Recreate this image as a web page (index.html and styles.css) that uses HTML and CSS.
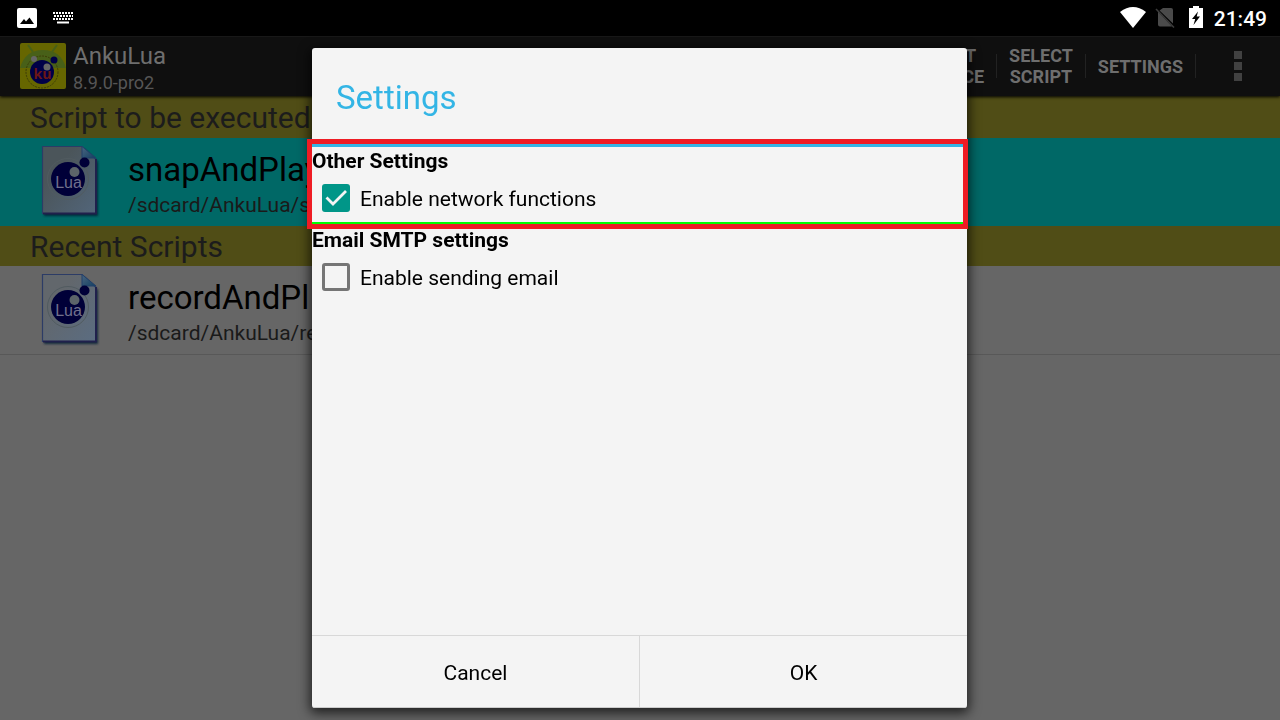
FILE: index.html
```html
<!DOCTYPE html>
<html lang="en">
<head>
<meta charset="utf-8">
<meta name="viewport" content="width=device-width, initial-scale=1">
<title>AnkuLua</title>
<link rel="stylesheet" href="styles.css">
</head>
<body>
<svg class="defs" width="0" height="0" aria-hidden="true">
  <defs>
    <linearGradient id="paper" x1="0" y1="0" x2="1" y2="1">
      <stop offset="0.3" stop-color="#56708f" stop-opacity="0"/>
      <stop offset="1" stop-color="#56708f" stop-opacity="0.6"/>
    </linearGradient>
    <linearGradient id="fold" x1="0" y1="0" x2="1" y2="1">
      <stop offset="0" stop-color="#4b6680"/>
      <stop offset="1" stop-color="#123f62"/>
    </linearGradient>
    <filter id="soft"><feGaussianBlur stdDeviation="1.2"/></filter>
    <symbol id="lua-file" viewBox="0 0 62 74">
      <path d="M4 4H44L58 17V71H4Z" fill="#001c30" opacity="0.8" filter="url(#soft)"/>
      <path class="sheet" d="M2.500 1.500H42L56 14.500V68.500H2.500Z"/>
      <path d="M2.500 1.500H42L56 14.500V68.500H2.500Z" fill="url(#paper)" stroke="#2c3c66" stroke-width="1.200"/>
      <path d="M42 1.500V13H56Z" fill="url(#fold)" stroke="#22406a"/>
      <path d="M56 14V68.500H3" fill="none" stroke="#20204c" stroke-width="2"/>
      <circle cx="28" cy="34" r="20.500" fill="none" stroke="#515b60" stroke-width="1"/>
      <circle cx="28" cy="34" r="17" fill="#000038"/>
      <circle cx="44.500" cy="17.500" r="5" fill="#000038"/>
      <circle cx="34.500" cy="27" r="5" fill="#5c6469"/>
      <text x="28.500" y="43" text-anchor="middle" class="lua-text">Lua</text>
    </symbol>
  </defs>
</svg>
<div class="screen">
  <header class="status">
    <div class="status-group">
      <svg width="20" height="20" viewBox="0 0 20 20" aria-hidden="true"><rect width="20" height="20" rx="2" fill="#fff"/><path d="M3 16L7 11L9 13.500L12.500 9.500L17 16Z"/></svg>
      <svg width="20" height="12" viewBox="0 0 20 12" aria-hidden="true"><path d="M0 1H20M1 4H20M0 7H20" stroke="#fff" stroke-width="2" stroke-dasharray="2 1"/><path d="M4 10.500H16" stroke="#fff" stroke-width="2"/></svg>
    </div>
    <div class="status-group right">
      <svg class="wifi" width="26" height="22" viewBox="0 0 26 22" aria-hidden="true"><path d="M0 6Q13 -4 26 6L13 22Z" fill="#fff"/></svg>
      <svg width="20" height="22" viewBox="0 0 20 22" aria-hidden="true"><path d="M8 2H16Q18 2 18 4V17.500L4.500 4.500ZM3 5.500L17 20.500H5Q3 20.500 3 18.500Z" fill="#4a4a4a"/><path d="M1 3L19 21.500" stroke="#3c3c3c" stroke-width="1.500"/></svg>
      <svg width="14" height="22" viewBox="0 0 14 22" aria-hidden="true"><path d="M4 0H10V2H14V22H0V2H4Z" fill="#fff"/><path d="M9 5.500L3 13H6.200L4.500 19L11 10.500H7.700Z"/></svg>
      <time>21:49</time>
    </div>
  </header>

  <div class="appbar">
    <svg class="logo" width="48" height="48" viewBox="0 0 48 48" role="img" aria-label="AnkuLua">
      <rect x="1" y="1" width="46" height="46" rx="2" fill="#666600"/>
      <path d="M1 26Q6 8 24 8Q42 8 47 26Z" fill="#486018"/>
      <path d="M9 3L14 10M38 3L33 10" stroke="#486018" stroke-width="2"/>
      <circle cx="23" cy="30" r="16" fill="none" stroke="#3d3d08" stroke-dasharray="2 1"/>
      <circle cx="23" cy="30" r="12" fill="#000047"/>
      <circle cx="35" cy="18" r="3.500" fill="#000047"/>
      <circle cx="15" cy="17" r="3" fill="#666"/>
      <circle cx="28" cy="25" r="3.500" fill="#666"/>
      <text x="23.500" y="37" text-anchor="middle" class="logo-text">ku</text>
    </svg>
    <div class="brand">
      <h1>AnkuLua</h1>
      <p>8.9.0-pro2</p>
    </div>
    <nav class="actions">
      <button type="button">START<br>SERVICE</button>
      <button type="button">SELECT<br>SCRIPT</button>
      <button type="button">SETTINGS</button>
      <button type="button" class="more" aria-label="More options">
        <svg width="8" height="30" viewBox="0 0 8 30" fill="#414141" aria-hidden="true"><path d="M0 0H8V8H0ZM0 11H8V19H0ZM0 22H8V30H0Z"/></svg>
      </button>
    </nav>
  </div>

  <main>
    <h2 class="band first">Script to be executed</h2>
    <article class="script active">
      <svg class="file" width="62" height="74" aria-hidden="true"><use href="#lua-file"/></svg>
      <div><h3>snapAndPlay</h3><p>/sdcard/AnkuLua/s</p></div>
    </article>
    <h2 class="band">Recent Scripts</h2>
    <article class="script">
      <svg class="file" width="62" height="74" aria-hidden="true"><use href="#lua-file"/></svg>
      <div><h3>recordAndPl</h3><p>/sdcard/AnkuLua/re</p></div>
    </article>
  </main>
</div>

<div class="overlay">
  <form class="dialog" role="dialog" aria-labelledby="dialog-title">
    <h2 id="dialog-title" class="dialog-title">Settings</h2>
    <section class="group highlighted">
      <h3>Other Settings</h3>
      <label class="option" for="network"><input type="checkbox" id="network" checked><span>Enable network functions</span></label>
    </section>
    <section class="group">
      <h3>Email SMTP settings</h3>
      <label class="option" for="email"><input type="checkbox" id="email"><span>Enable sending email</span></label>
    </section>
    <footer class="buttons">
      <button type="button">Cancel</button>
      <button type="button">OK</button>
    </footer>
  </form>
</div>
</body>
</html>
```

FILE: styles.css
```css
* { box-sizing: border-box; }
body, h1, h2, h3, p { margin: 0; font-weight: 400; }
body { font-family: Roboto, "Liberation Sans", sans-serif; background: #666; color: #000; overflow: hidden; }
button { font: inherit; color: inherit; background: none; border: 0; padding: 0; }
svg { display: block; flex: none; }
.defs { position: absolute; }

.screen { min-height: 100vh; display: flex; flex-direction: column; }

.status { height: 36px; padding: 0 13px 0 17px; background: #000; color: #fff; display: flex; justify-content: space-between; align-items: center; }
.status-group { display: flex; align-items: center; gap: 16px; }
.status-group.right { gap: 14px; padding-bottom: 2px; }
.wifi { margin-right: -5px; }
.status time { font-size: 21px; font-weight: 500; margin-left: -3px; padding-top: 4px; }

.appbar { height: 60px; padding-bottom: 1px; background: #0f0f0f; color: #6e6e6e; border-top: 1px solid #181818; display: flex; align-items: center; box-shadow: 0 1px 3px #000; position: relative; }
.logo { margin-left: 19px; }
.logo-text { font: 700 14px "Open Sans", sans-serif; fill: #6b1616; }
.brand { margin-left: 6px; padding-top: 3px; flex: 1; }
.brand h1 { font-size: 24px; line-height: 30px; }
.brand p { font-size: 18px; line-height: 24px; color: #565656; }
.actions { display: flex; align-items: center; }
.actions button { height: 24px; padding: 0 12px; border-right: 1px solid #222; font-size: 18px; line-height: 21px; font-weight: 700; display: flex; align-items: center; text-align: center; }
.actions .more { width: 84px; border: 0; justify-content: center; }

.band { height: 40px; line-height: 41px; padding-left: 30px; font-size: 30px; color: #1c1c1c; background: #504d16; }
.band.first { height: 42px; line-height: 44px; }
.script { height: 89px; padding-left: 40px; display: flex; align-items: center; gap: 26px; white-space: nowrap; border-bottom: 1px solid #585858; }
.script.active { height: 88px; background: #006866; border: 0; }
.script div { padding-top: 7px; }
.script h3 { font-size: 33px; line-height: 39px; }
.script p { font-size: 21px; line-height: 33px; color: #1a1a1a; }
.file { color: #62676c; }
.script.active .file { color: #4b555a; }
.sheet { fill: currentColor; }
.lua-text { font: 16px "Liberation Sans", sans-serif; fill: #70708c; }

.overlay { position: fixed; inset: 0; padding: 48px 313px 12px 312px; display: flex; }
.dialog { flex: 1; display: flex; flex-direction: column; background: #f4f4f4; border-radius: 3px; box-shadow: 0 3px 12px 2px rgba(0, 0, 0, 0.7); }
.dialog-title { padding: 0 24px; font-size: 33px; line-height: 100px; height: 96px; color: #33b5e5; }
.group { margin-top: 2px; }
.group h3 { height: 27px; font-size: 21px; line-height: 29px; font-weight: 700; }
.highlighted { position: relative; margin: 0; border-top: 3px solid #33b5e5; border-bottom: 2px solid #00ff00; }
.highlighted::after { content: ""; position: absolute; inset: -8px -1px -7px -5px; border: 5px solid #ee1c24; pointer-events: none; }
.option { height: 48px; padding-left: 10px; display: flex; align-items: center; gap: 10px; font-size: 21px; line-height: 24px; }
.option span { padding-top: 2px; }
.option input { appearance: none; width: 28px; height: 28px; margin: 0; border: 3px solid #757575; border-radius: 3px; }
.option input:checked { border: 0; background: #009688 url("data:image/svg+xml,%3Csvg xmlns='http://www.w3.org/2000/svg' viewBox='0 0 28 28'%3E%3Cpath d='M4.500 13.500L11 20L24 7' fill='none' stroke='%23f4f4f4' stroke-width='2.800'/%3E%3C/svg%3E"); }
.buttons { margin-top: auto; height: 73px; border-top: 1px solid #d8d8d8; border-bottom: 1px solid #ccc; border-radius: 0 0 3px 3px; display: flex; }
.buttons button { flex: 1; padding-top: 2px; font-size: 21px; }
.buttons button + button { border-left: 1px solid #d8d8d8; }
```
